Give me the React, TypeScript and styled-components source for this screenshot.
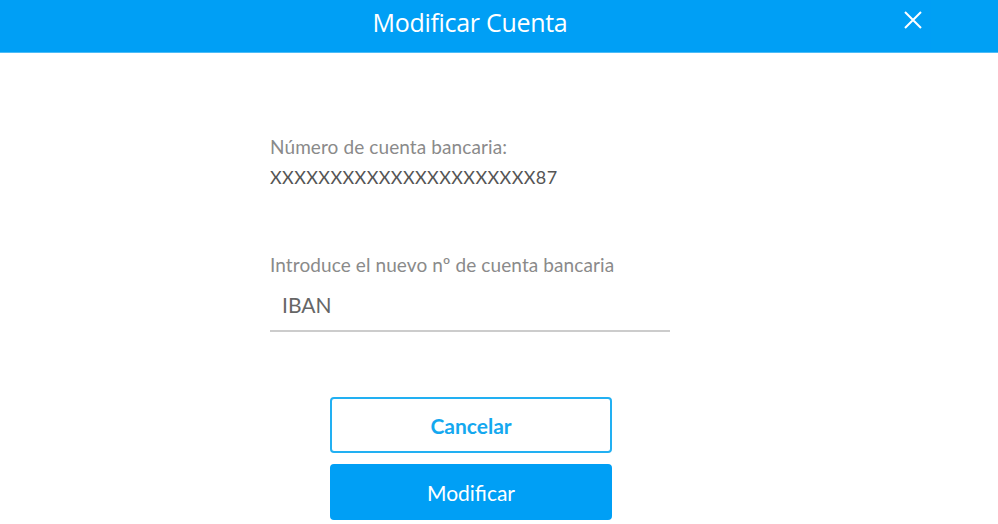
import React from "react";
import styled, { createGlobalStyle } from "styled-components";

const GlobalStyle = createGlobalStyle`
  html, body {
    margin: 0;
    padding: 0;
    background: #ffffff;
    font-family: "Lato", "Open Sans", sans-serif;
  }
`;

export default function App() {
  return (
    <>
      <GlobalStyle />
      <Page>
        <Modal>
          <Header>
            <Title>Modificar Cuenta</Title>
            <CloseButton aria-label="Cerrar">
              <svg width="20" height="20" viewBox="0 0 20 20">
                <path d="M2 2 L18 18 M18 2 L2 18" stroke="#ffffff" strokeWidth="2" />
              </svg>
            </CloseButton>
          </Header>
          <Body>
            <Field>
              <Label>Número de cuenta bancaria:</Label>
              <Value>XXXXXXXXXXXXXXXXXXXXXX87</Value>
            </Field>
            <Field $top={66}>
              <Label>Introduce el nuevo nº de cuenta bancaria</Label>
              <Input placeholder="IBAN" />
            </Field>
            <Actions>
              <Button>Cancelar</Button>
              <Button $primary>Modificar</Button>
            </Actions>
          </Body>
        </Modal>
        <SideStrip>
          <SideTop />
        </SideStrip>
      </Page>
    </>
  );
}

const Page = styled.div`
  display: flex;
  width: 998px;
  height: 524px;
  overflow: hidden;
`;

const Modal = styled.div`
  width: 931px;
  display: flex;
  flex-direction: column;
`;

const Header = styled.div`
  position: relative;
  height: 53px;
  background: #009ff5;
  display: flex;
  align-items: center;
  justify-content: center;
  padding-left: 9px;
  border-bottom: 1px solid #4dbcf7;
  box-sizing: border-box;
`;

const Title = styled.div`
  color: #ffffff;
  font-size: 25px;
  font-family: "Open Sans", sans-serif;
  letter-spacing: -0.3px;
  margin-top: -8px;
`;

const CloseButton = styled.button`
  position: absolute;
  right: 8px;
  top: 10px;
  background: none;
  border: none;
  padding: 0;
  width: 20px;
  height: 20px;
  cursor: pointer;
`;

const SideStrip = styled.div`
  flex: 1;
  display: flex;
  flex-direction: column;
`;

const SideTop = styled.div`
  height: 53px;
  background: #00a0f4;
  border-bottom: 1px solid #4dbcf7;
  box-sizing: border-box;
`;

const Body = styled.div`
  display: flex;
  flex-direction: column;
  padding: 83px 0 0 270px;
`;

const Field = styled.div<{ $top?: number }>`
  display: flex;
  flex-direction: column;
  margin-top: ${(p) => p.$top ?? 0}px;
`;

const Label = styled.div`
  font-size: 19px;
  color: #8a8a8a;
  line-height: 22px;
  letter-spacing: 0.1px;
`;

const Value = styled.div`
  margin-top: 8px;
  font-size: 18px;
  color: #555555;
  line-height: 22px;
  letter-spacing: 0.4px;
`;

const Input = styled.input`
  width: 400px;
  margin-top: 12px;
  box-sizing: border-box;
  border: none;
  border-bottom: 2px solid #cccccc;
  padding: 4px 0 13px 12px;
  font-family: "Lato", sans-serif;
  font-size: 21px;
  outline: none;
  background: transparent;
  &::placeholder {
    color: #666666;
  }
`;

const Actions = styled.div`
  display: flex;
  flex-direction: column;
  gap: 11px;
  margin: 65px 0 0 60px;
`;

const Button = styled.button<{ $primary?: boolean }>`
  width: 282px;
  height: 56px;
  border-radius: 4px;
  border: 2px solid ${(p) => (p.$primary ? "#009ff5" : "#22b0f2")};
  background: ${(p) => (p.$primary ? "#009ff5" : "#ffffff")};
  color: ${(p) => (p.$primary ? "#ffffff" : "#14a8ef")};
  font-family: "Lato", sans-serif;
  font-size: 21px;
  font-weight: ${(p) => (p.$primary ? 400 : 700)};
  cursor: pointer;
`;
